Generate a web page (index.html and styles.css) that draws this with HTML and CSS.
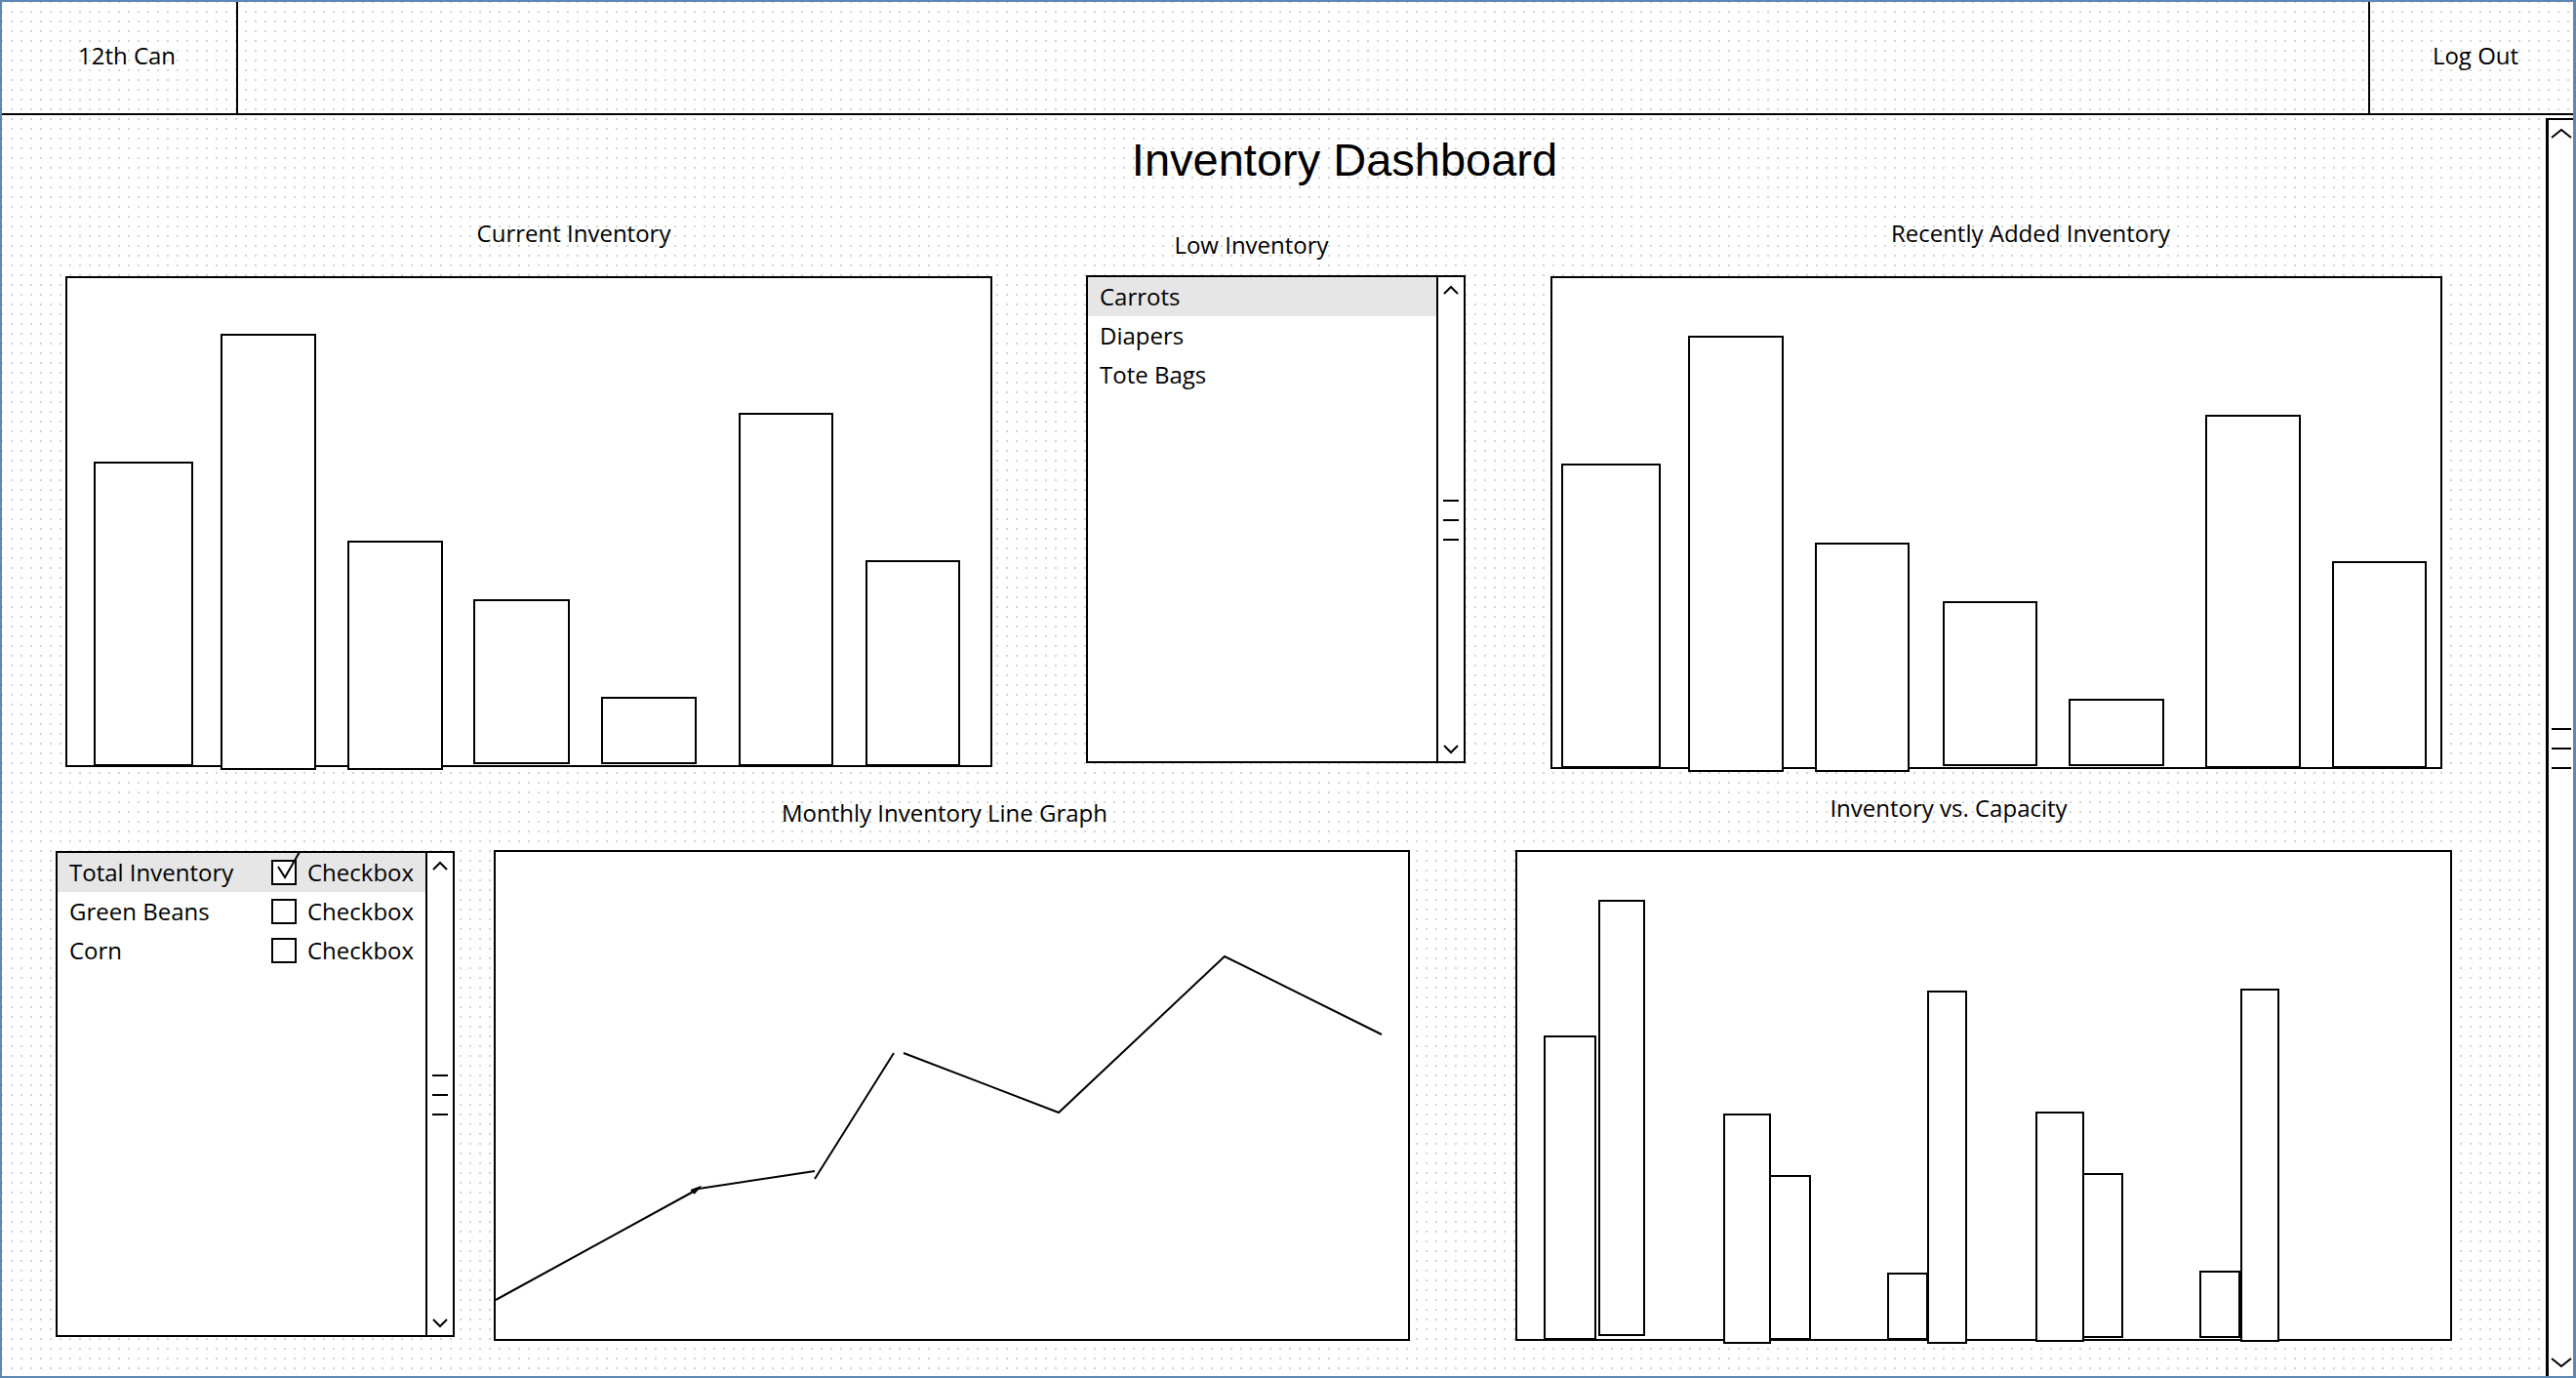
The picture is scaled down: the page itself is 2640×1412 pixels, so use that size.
FILE: index.html
```html
<!DOCTYPE html>
<html lang="en">
<head>
    <meta charset="UTF-8">
    <meta name="viewport" content="width=device-width, initial-scale=1.0">
    <title>Inventory Dashboard</title>
    <link rel="stylesheet" href="styles.css">
</head>
<body>
<div class="frame">
    <div class="topbar">
        <div class="brand">12th Can</div>
        <div class="spacer"></div>
        <div class="logout">Log Out</div>
    </div>

    <div class="page">
        <div class="content">
            <h1 class="title">Inventory Dashboard</h1>

            <div class="row row-top">
                <div class="panel current">
                    <div class="label">Current Inventory</div>
                    <div class="chart">
                        <svg viewBox="0 0 946 499">
                            <rect x="28" y="189" width="100" height="310"/>
                            <rect x="158" y="58" width="96" height="445"/>
                            <rect x="288" y="270" width="96" height="233"/>
                            <rect x="417" y="330" width="97" height="167"/>
                            <rect x="548" y="430" width="96" height="67"/>
                            <rect x="689" y="139" width="95" height="360"/>
                            <rect x="819" y="290" width="95" height="209"/>
                        </svg>
                    </div>
                </div>

                <div class="panel low">
                    <div class="label">Low Inventory</div>
                    <div class="listbox">
                        <div class="list-items">
                            <div class="list-row selected">Carrots</div>
                            <div class="list-row">Diapers</div>
                            <div class="list-row">Tote Bags</div>
                        </div>
                        <div class="list-scroll">
                            <svg class="caret" width="16" height="10"><polyline points="1,9 8,2 15,9"/></svg>
                            <div class="grip"><i></i><i></i><i></i></div>
                            <svg class="caret" width="16" height="10"><polyline points="1,1 8,8 15,1"/></svg>
                        </div>
                    </div>
                </div>

                <div class="panel recent">
                    <div class="label">Recently Added Inventory</div>
                    <div class="chart">
                        <svg viewBox="0 0 910 501">
                            <rect x="10" y="191" width="100" height="310"/>
                            <rect x="140" y="60" width="96" height="445"/>
                            <rect x="270" y="272" width="95" height="233"/>
                            <rect x="401" y="332" width="95" height="167"/>
                            <rect x="530" y="432" width="96" height="67"/>
                            <rect x="670" y="141" width="96" height="360"/>
                            <rect x="800" y="291" width="95" height="210"/>
                        </svg>
                    </div>
                </div>
            </div>

            <div class="row row-bottom">
                <div class="panel items">
                    <div class="listbox">
                        <div class="list-items">
                            <div class="list-row check-row selected">
                                <span>Total Inventory</span>
                                <span class="checkbox">
                                    <span class="box">
                                        <svg class="tick" width="26" height="26"><path d="M7 7 L14 18 L29 -8"/></svg>
                                    </span>Checkbox
                                </span>
                            </div>
                            <div class="list-row check-row">
                                <span>Green Beans</span>
                                <span class="checkbox"><span class="box"></span>Checkbox</span>
                            </div>
                            <div class="list-row check-row">
                                <span>Corn</span>
                                <span class="checkbox"><span class="box"></span>Checkbox</span>
                            </div>
                        </div>
                        <div class="list-scroll">
                            <svg class="caret" width="16" height="10"><polyline points="1,9 8,2 15,9"/></svg>
                            <div class="grip"><i></i><i></i><i></i></div>
                            <svg class="caret" width="16" height="10"><polyline points="1,1 8,8 15,1"/></svg>
                        </div>
                    </div>
                </div>

                <div class="panel monthly">
                    <div class="label">Monthly Inventory Line Graph</div>
                    <div class="chart">
                        <svg viewBox="0 0 935 499">
                            <path class="line" d="M0 459 L208 345 M200 347 L208 344 L203 350 M208 345 L327 327 M327 335 L408 206 M418 206 L577 267 L747 107 L908 187"/>
                        </svg>
                    </div>
                </div>

                <div class="panel capacity">
                    <div class="label">Inventory vs. Capacity</div>
                    <div class="chart">
                        <svg viewBox="0 0 956 499">
                            <rect x="28" y="189" width="52" height="310"/>
                            <rect x="84" y="50" width="46" height="445"/>
                            <rect x="212" y="269" width="47" height="234"/>
                            <rect x="259" y="332" width="41" height="167"/>
                            <rect x="380" y="432" width="40" height="67"/>
                            <rect x="421" y="143" width="39" height="360"/>
                            <rect x="532" y="267" width="48" height="234"/>
                            <rect x="580" y="330" width="40" height="167"/>
                            <rect x="700" y="430" width="40" height="67"/>
                            <rect x="742" y="141" width="38" height="360"/>
                        </svg>
                    </div>
                </div>
            </div>
        </div>

        <div class="page-scroll">
            <svg class="caret" width="22" height="10"><polyline points="1,9 11,1 21,9"/></svg>
            <div class="grip wide"><i></i><i></i><i></i></div>
            <svg class="caret" width="22" height="10"><polyline points="1,1 11,9 21,1"/></svg>
        </div>
    </div>
</div>
</body>
</html>
```

FILE: styles.css
```css
* {
    box-sizing: border-box;
}
html, body {
    margin: 0;
}
body {
    font-family: "Open Sans", sans-serif;
    font-size: 24px;
    color: #000;
}

/* whole mockup, dotted canvas */
.frame {
    width: 2640px;
    height: 1412px;
    border: 2px solid #5d88b3;
    border-right-width: 3px;
    background-color: #d4d4d4;
    background-image:
        linear-gradient(to right, transparent 2px, #fff 2px),
        linear-gradient(to bottom, transparent 2px, #fff 2px);
    background-size: 10px 10px;
    background-position: 9px 9px;
    display: flex;
    flex-direction: column;
    overflow: hidden;
}

.topbar {
    height: 116px;
    border-bottom: 2px solid #000;
    display: flex;
    flex-shrink: 0;
}
.brand {
    width: 242px;
    border-right: 2px solid #000;
    display: flex;
    align-items: center;
    justify-content: center;
    padding: 0 0 5px 16px;
}
.spacer {
    flex: 1;
}
.logout {
    width: 210px;
    border-left: 2px solid #000;
    display: flex;
    align-items: center;
    justify-content: center;
    padding: 0 0 5px 8px;
}

.page {
    flex: 1;
    display: flex;
    min-height: 0;
}
.content {
    flex: 1;
}
.title {
    margin: 18px 0 0;
    padding-left: 145px;
    text-align: center;
    font-family: "Liberation Sans", Arial, sans-serif;
    font-size: 47px;
    font-weight: normal;
    line-height: 56px;
}

.row {
    display: flex;
    align-items: flex-start;
}
.row-top {
    margin-top: 31px;
}
.row-bottom {
    margin-top: 24px;
}

.panel {
    display: flex;
    flex-direction: column;
}
.label {
    height: 32px;
    line-height: 32px;
    text-align: center;
    white-space: nowrap;
}

.current { width: 950px; margin-left: 65px; }
.current .label { padding-left: 92px; }
.current .chart { height: 503px; margin-top: 28px; }

.low { width: 389px; margin-left: 96px; }
.low .label { margin-top: 12px; padding-right: 50px; }
.low .listbox { height: 500px; margin-top: 15px; }

.recent { width: 914px; margin-left: 87px; }
.recent .label { padding-left: 70px; }
.recent .chart { height: 505px; margin-top: 28px; }

.items { width: 409px; margin-left: 55px; margin-top: 60px; }
.items .listbox { height: 498px; }

.monthly { width: 939px; margin-left: 40px; }
.monthly .label { margin-top: 5px; padding-right: 15px; }
.monthly .chart { height: 503px; margin-top: 22px; }

.capacity { width: 960px; margin-left: 108px; }
.capacity .label { padding-right: 72px; }
.capacity .chart { height: 503px; margin-top: 27px; }

/* charts */
.chart {
    border: 2px solid #000;
    background: #fff;
}
.chart svg {
    display: block;
    width: 100%;
    height: 100%;
    overflow: visible;
}
.chart rect {
    fill: #fff;
    stroke: #000;
    stroke-width: 2;
}
.chart .line {
    fill: none;
    stroke: #000;
    stroke-width: 2;
}

/* list boxes */
.listbox {
    border: 2px solid #000;
    background: #fff;
    display: flex;
}
.list-items {
    flex: 1;
}
.list-row {
    height: 40px;
    line-height: 40px;
    padding-left: 12px;
    white-space: nowrap;
}
.list-row.selected {
    background: #e6e6e6;
}
.check-row {
    display: grid;
    grid-template-columns: 207px auto;
    align-items: center;
}
.checkbox {
    display: flex;
    align-items: center;
}
.box {
    position: relative;
    width: 26px;
    height: 26px;
    border: 2px solid #000;
    background: #fff;
    margin-right: 11px;
}
.tick {
    position: absolute;
    left: -2px;
    top: -2px;
    overflow: visible;
}
.tick path {
    fill: none;
    stroke: #000;
    stroke-width: 2;
}

.list-scroll {
    width: 28px;
    border-left: 2px solid #000;
    display: flex;
    flex-direction: column;
    align-items: center;
    justify-content: space-between;
    padding: 8px 0 7px;
}
.caret {
    display: block;
    overflow: visible;
}
.caret polyline {
    fill: none;
    stroke: #000;
    stroke-width: 2;
}
.grip {
    display: flex;
    flex-direction: column;
    gap: 18px;
}
.grip i {
    display: block;
    width: 16px;
    height: 2px;
    background: #000;
}
.grip.wide i {
    width: 20px;
}

.page-scroll {
    width: 28px;
    margin-top: 3px;
    border-left: 3px solid #000;
    border-top: 2px solid #000;
    background: #fff;
    display: flex;
    flex-direction: column;
    align-items: center;
    justify-content: space-between;
    padding: 9px 0 9px;
}
```
